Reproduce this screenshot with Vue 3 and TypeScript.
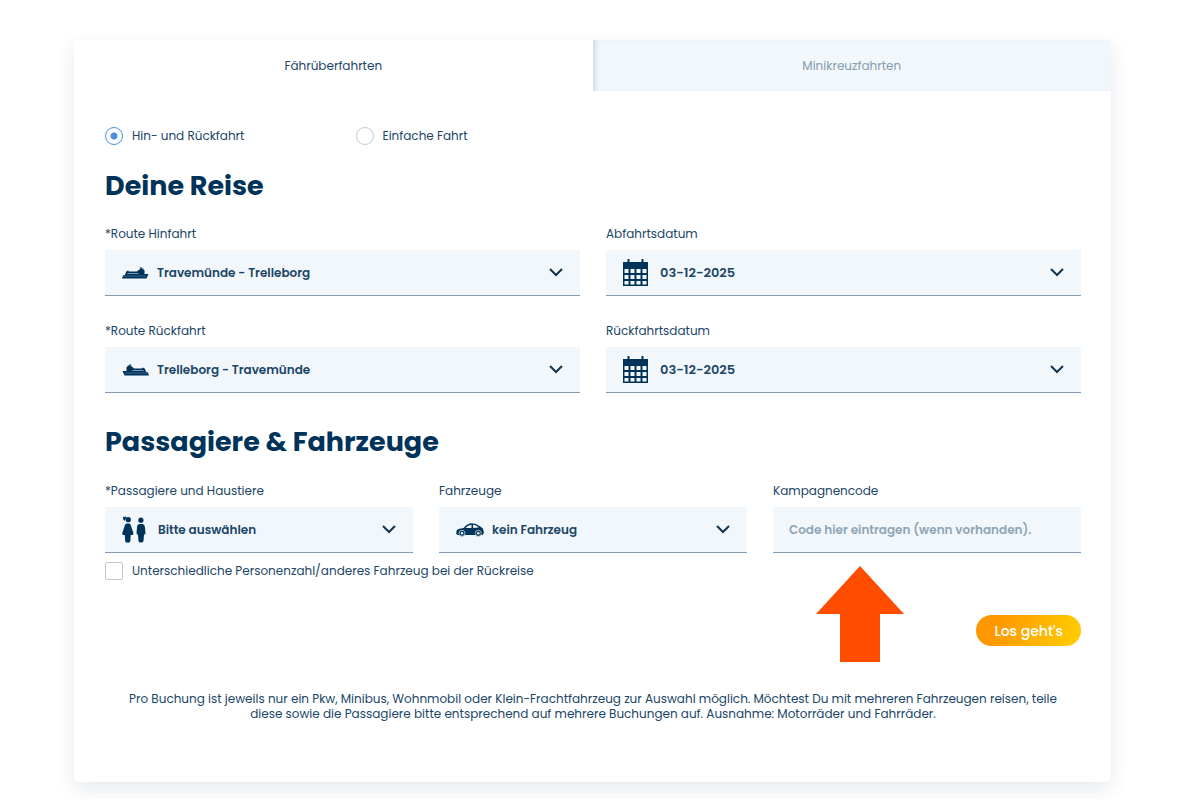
<script setup lang="ts">
import { ref } from 'vue'

type Trip = 'return' | 'single'

const tabs = ['Fährüberfahrten', 'Minikreuzfahrten']
const activeTab = ref(0)
const trip = ref<Trip>('return')
const tripOptions: { value: Trip; label: string }[] = [
  { value: 'return', label: 'Hin- und Rückfahrt' },
  { value: 'single', label: 'Einfache Fahrt' },
]
const journeys = [
  {
    id: 'out',
    routeLabel: '*Route Hinfahrt',
    route: 'Travemünde - Trelleborg',
    dateLabel: 'Abfahrtsdatum',
    date: '03-12-2025',
  },
  {
    id: 'back',
    routeLabel: '*Route Rückfahrt',
    route: 'Trelleborg - Travemünde',
    dateLabel: 'Rückfahrtsdatum',
    date: '03-12-2025',
  },
]
const differs = ref(false)
const code = ref('')
</script>

<template>
  <main class="page">
    <form class="card" @submit.prevent>
      <div class="tabs" role="tablist">
        <button
          v-for="(tab, i) in tabs"
          :key="tab"
          type="button"
          role="tab"
          class="tab"
          :class="{ inactive: i !== activeTab }"
          :aria-selected="i === activeTab"
          @click="activeTab = i"
        >
          {{ tab }}
        </button>
      </div>

      <div class="body">
        <div class="trips">
          <label v-for="o in tripOptions" :key="o.value" class="choice">
            <input v-model="trip" type="radio" name="trip" class="radio" :value="o.value" />
            {{ o.label }}
          </label>
        </div>

        <h2>Deine Reise</h2>
        <div class="grid two">
          <template v-for="j in journeys" :key="j.id">
            <div class="field">
              <label :for="j.id + '-route'">{{ j.routeLabel }}</label>
              <div class="control">
                <select :id="j.id + '-route'">
                  <option>{{ j.route }}</option>
                </select>
                <svg class="icon ship" :class="{ flip: j.id === 'back' }" viewBox="0 0 27 14" aria-hidden="true">
                  <path d="M0 12.500 1 9.500 2.800 9 4.300 5.500 6 4.500 7 5.500H15L16.500 4H17.500V2.500H18.500V1H19.500V2.500H21.500V4H22.500V8H26.500L24.500 12.500Z" />
                  <path class="line" d="M5.500 7.500H16.500" />
                  <path class="line faint" d="M1 10H24" />
                </svg>
                <svg class="chevron" viewBox="0 0 12 7" aria-hidden="true"><path d="M0 0 6 6 12 0" /></svg>
              </div>
            </div>
            <div class="field">
              <label :for="j.id + '-date'">{{ j.dateLabel }}</label>
              <div class="control">
                <input :id="j.id + '-date'" class="date" type="text" readonly :value="j.date" />
                <svg class="icon calendar" viewBox="0 0 25 27" aria-hidden="true">
                  <path d="M4.500 0H6.500V3H18.500V0H20.500V3H25V27H0V3H4.500Z" />
                  <path class="cells" d="M1.500 10h4v4h-4zM7.500 10h4v4h-4zM13.500 10h4v4h-4zM19.500 10h4v4h-4zM1.500 16h4v4h-4zM7.500 16h4v4h-4zM13.500 16h4v4h-4zM19.500 16h4v4h-4zM1.500 22h4v3.500h-4zM7.500 22h4v3.500h-4zM13.500 22h4v3.500h-4zM19.500 22h4v3.500h-4z" />
                </svg>
                <svg class="chevron" viewBox="0 0 12 7" aria-hidden="true"><path d="M0 0 6 6 12 0" /></svg>
              </div>
            </div>
          </template>
        </div>

        <h2 class="second">Passagiere &amp; Fahrzeuge</h2>
        <div class="grid three">
          <div class="field">
            <label for="passengers">*Passagiere und Haustiere</label>
            <div class="control">
              <select id="passengers">
                <option>Bitte auswählen</option>
              </select>
              <svg class="icon people" viewBox="0 0 24 27" aria-hidden="true">
                <circle cx="6.300" cy="3.700" r="2.600" />
                <path d="M1 0.800 2.800 1 4.200 0.200 4.500 2.500 3.200 3.500 2.800 5 1.300 3.800Z" />
                <path d="M4.800 7.500H7.200Q8.300 7.700 8.700 9L11.400 17Q11.500 18.500 10.500 19H8.700L8.300 25.500Q7.300 27 5.900 26.500Q4.200 27 3.200 25.500L2.800 19H1Q0 18.500 0.300 17L3 9Q3.400 7.700 4.800 7.500Z" />
                <circle cx="18.900" cy="4.200" r="2.600" />
                <path d="M17.300 8H20.500Q22.500 8.300 22.800 10.500L23.500 17Q23.300 18.800 22 18.800L21.500 25Q21 26.700 19 26.600Q17 26.700 16.500 25L16 18.800Q14.700 18.800 14.500 17L15.100 10.500Q15.300 8.300 17.300 8Z" />
              </svg>
              <svg class="chevron" viewBox="0 0 12 7" aria-hidden="true"><path d="M0 0 6 6 12 0" /></svg>
            </div>
          </div>
          <div class="field">
            <label for="vehicle">Fahrzeuge</label>
            <div class="control">
              <select id="vehicle">
                <option>kein Fahrzeug</option>
              </select>
              <svg class="icon car" viewBox="0 0 28 14" aria-hidden="true">
                <path d="M0.300 9.500 0.800 7Q3 5.500 7.500 5Q10.500 1 13.500 0.500Q19.500 -0.300 23.500 3L26.500 5L27.700 8V10.500L26.500 12H1.500L0.300 11Z" />
                <path class="glass" d="M9.500 5Q11.500 2.200 15.500 1.800V5ZM17 1.800Q20.500 1.800 22.800 4.500L17.200 5Z" />
                <g class="wheel"><circle cx="6" cy="10.300" r="3" /><circle cx="22.300" cy="10.300" r="3" /></g>
                <g class="hub"><circle cx="6" cy="10.300" r="1.200" /><circle cx="22.300" cy="10.300" r="1.200" /></g>
              </svg>
              <svg class="chevron" viewBox="0 0 12 7" aria-hidden="true"><path d="M0 0 6 6 12 0" /></svg>
            </div>
          </div>
          <div class="field campaign">
            <label for="code">Kampagnencode</label>
            <div class="control">
              <input id="code" v-model="code" class="code" type="text" placeholder="Code hier eintragen (wenn vorhanden)." />
            </div>
            <svg class="arrow" viewBox="0 0 88 96" aria-hidden="true"><path d="M44 0 88 48H64V96H24V48H0Z" /></svg>
          </div>
        </div>

        <label class="choice differs">
          <input v-model="differs" type="checkbox" class="check" />
          Unterschiedliche Personenzahl/anderes Fahrzeug bei der Rückreise
        </label>

        <div class="actions"><button type="submit" class="go">Los geht's</button></div>

        <p class="note">
          Pro Buchung ist jeweils nur ein Pkw, Minibus, Wohnmobil oder Klein-Frachtfahrzeug zur Auswahl möglich. Möchtest Du mit mehreren Fahrzeugen reisen, teile diese sowie die Passagiere bitte entsprechend auf mehrere Buchungen auf. Ausnahme: Motorräder und Fahrräder.
        </p>
      </div>
    </form>
  </main>
</template>

<style>
body {
  margin: 0;
  background: #fff;
}
</style>

<style scoped>
.page {
  padding: 40px 89px 17px 74px;
  overflow: hidden;
  font-family: Poppins, Inter, "Liberation Sans", sans-serif;
  font-size: 12px;
  line-height: 20px;
  color: #1b4667;
}
.card {
  background: #fff;
  border-radius: 5px;
  box-shadow: 0 7px 20px rgba(0, 40, 85, 0.1);
}
button,
input,
select {
  font: inherit;
  color: inherit;
  margin: 0;
  border: 0;
  box-sizing: border-box;
}
.tabs {
  display: grid;
  grid-template-columns: 1fr 1fr;
}
.tab {
  height: 51px;
  padding: 0;
  background: none;
  cursor: pointer;
}
.tab.inactive {
  color: #849dae;
  background: #f2f7fc;
  box-shadow: inset 5px 0 4px -2px #d3dfe9;
}
.body {
  padding: 35px 30px 61px 31px;
}
.trips {
  display: grid;
  grid-template-columns: repeat(4, 1fr);
  column-gap: 26px;
}
.choice {
  display: flex;
  align-items: center;
  gap: 9px;
}
.radio,
.check {
  appearance: none;
  flex: none;
  width: 18px;
  height: 18px;
  background: #fff;
  border: 1px solid #c4c8cc;
}
.radio {
  border-radius: 50%;
}
.radio:checked {
  border-color: #4a90e2;
  background: radial-gradient(circle, #4a90e2 3px, #fff 4px);
}
.check {
  border-radius: 2px;
}
.check:checked {
  background: #4a90e2;
}
h2 {
  margin: 22px 0 20px;
  font-size: 27px;
  line-height: 36px;
  font-weight: 700;
  color: #003359;
}
h2.second {
  margin: 31px 0 21px;
}
.grid {
  display: grid;
  gap: 25px 26px;
}
.two {
  grid-template-columns: 1fr 1fr;
}
.three {
  grid-template-columns: repeat(3, 1fr);
}
.field {
  min-width: 0;
}
.field label {
  display: block;
  margin-bottom: 6px;
}
.control {
  display: grid;
  align-items: center;
  background: #f2f7fc;
  border-bottom: 1px solid #829bb0;
}
.control > * {
  grid-area: 1 / 1;
}
.control select,
.control input {
  appearance: none;
  width: 100%;
  height: 45px;
  padding: 0 40px 0 52px;
  background: transparent;
  font-weight: 600;
}
.three select {
  padding-left: 53px;
}
.control .date {
  padding-left: 54px;
  font-size: 13px;
}
.control .code {
  padding: 0 16px;
}
.code::placeholder {
  color: #8fa5b5;
  opacity: 1;
}
.icon,
.chevron {
  pointer-events: none;
}
.icon {
  margin-left: 17px;
  fill: #003359;
}
.ship {
  width: 27px;
  height: 14px;
}
.ship.flip {
  transform: scaleX(-1);
}
.line {
  fill: none;
  stroke: #7e9bb1;
  stroke-width: 1;
}
.line.faint {
  stroke: #3d6483;
}
.calendar {
  width: 25px;
  height: 27px;
}
.cells,
.glass,
.hub {
  fill: #f2f7fc;
}
.people {
  width: 24px;
  height: 27px;
}
.car {
  width: 28px;
  height: 14px;
}
.wheel {
  stroke: #a9bccb;
  stroke-width: 1;
}
.chevron {
  width: 12px;
  height: 7px;
  margin-right: 18px;
  justify-self: end;
  overflow: visible;
  fill: none;
  stroke: #12344f;
  stroke-width: 2;
}
.campaign {
  position: relative;
}
.arrow {
  position: absolute;
  top: 100%;
  left: 43px;
  width: 88px;
  height: 96px;
  margin-top: 13px;
  fill: #ff4d00;
  pointer-events: none;
}
.differs {
  margin-top: 8px;
}
.actions {
  display: flex;
  justify-content: flex-end;
  margin-top: 34px;
}
.go {
  height: 31px;
  padding: 0 18px;
  border-radius: 16px;
  background: linear-gradient(110deg, #ff9800 20%, #ffc800 90%);
  color: #fff;
  font-size: 14px;
  font-weight: 500;
  cursor: pointer;
}
.note {
  margin: 45px 0 0;
  padding: 0 16px;
  line-height: 15px;
  text-align: center;
}
</style>
